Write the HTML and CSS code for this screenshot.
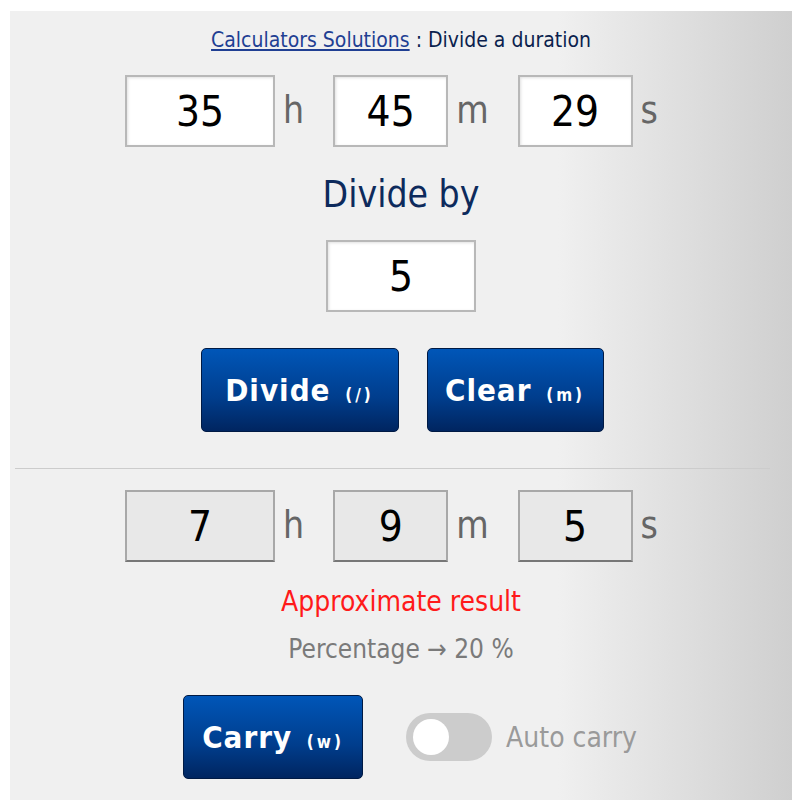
FILE: index.html
```html
<!DOCTYPE html>
<html>
  <head>
    <title>Divide a duration</title>
    <link rel="stylesheet" href="styles.css">
  </head>
  <body>
    <div class="calc">
      <div class="title">
        <a href="#" class="siteLink">Calculators Solutions</a> : Divide a duration
      </div>

      <div class="timeRow">
        <input class="field wide" type="text" value="35" /><span class="unit">h</span>
        <input class="field" type="text" value="45" /><span class="unit">m</span>
        <input class="field" type="text" value="29" /><span class="unit last">s</span>
      </div>

      <div class="divideBy">Divide by</div>
      <input class="field wide divisor" type="text" value="5" />

      <div class="buttons">
        <button class="btn divideBtn">Divide <small>(/)</small></button>
        <button class="btn clearBtn">Clear <small>(m)</small></button>
      </div>

      <hr class="sep" />

      <div class="timeRow result">
        <input class="field wide" type="text" value="7" readonly /><span class="unit">h</span>
        <input class="field" type="text" value="9" readonly /><span class="unit">m</span>
        <input class="field" type="text" value="5" readonly /><span class="unit last">s</span>
      </div>

      <div class="approx">Approximate result</div>
      <div class="percent">Percentage &rarr; 20 %</div>

      <div class="carryRow">
        <button class="btn carryBtn">Carry <small>(w)</small></button>
        <label class="switch">
          <input type="checkbox" />
          <span class="slider"></span>
        </label>
        <span class="autoLabel">Auto carry</span>
      </div>
    </div>
  </body>
</html>
```

FILE: styles.css
```css
body {
  margin: 0;
  padding: 11px 8px 9px 10px;
  background-color: #fff;
  font-family: "DejaVu Sans Condensed", "DejaVu Sans", sans-serif;
}

.calc {
  height: 789px;
  box-sizing: border-box;
  display: flex;
  flex-direction: column;
  align-items: center;
  padding-top: 16px;
  background: linear-gradient(to right, #f0f0f0 0%, #f0f0f0 70%, #cfcfcf 100%);
}

.title {
  height: 26px;
  line-height: 26px;
  font-size: 21px;
  color: #0b1f4e;
}

.siteLink {
  color: #1f3f93;
  text-decoration: underline;
}

.timeRow {
  display: flex;
  align-items: center;
  margin-top: 22px;
  padding-right: 5px;
}

.field {
  width: 115px;
  height: 72px;
  box-sizing: border-box;
  border: 2px solid #b8b8b8;
  background-color: #fff;
  box-shadow: inset 1px 1px 3px rgba(0, 0, 0, 0.12);
  font-family: inherit;
  font-size: 42px;
  color: #000;
  text-align: center;
  padding: 0;
}

.field.wide {
  width: 150px;
}

.unit {
  margin: 0 29px 0 8px;
  font-size: 37px;
  color: #666;
  line-height: 72px;
}

.unit.last {
  margin-right: 14px;
}

.divideBy {
  margin-top: 23px;
  height: 50px;
  line-height: 50px;
  font-size: 37px;
  color: #0d2a5c;
}

.divisor {
  margin-top: 20px;
}

.buttons {
  display: flex;
  gap: 28px;
  margin-top: 36px;
  padding-left: 2px;
}

.btn {
  height: 84px;
  padding: 0;
  border: 1px solid #001a44;
  border-radius: 5px;
  background: linear-gradient(to bottom, #0056b8 0%, #003d8c 60%, #002560 100%);
  color: #fff;
  font-family: inherit;
  font-size: 31px;
  font-weight: bold;
  letter-spacing: 1px;
  cursor: pointer;
}

.btn small {
  font-size: 17px;
  letter-spacing: 3px;
  margin-left: 4px;
}

.divideBtn {
  width: 198px;
}

.clearBtn {
  width: 177px;
}

.sep {
  width: 755px;
  margin: 36px 0 0 5px;
  border: none;
  border-top: 1px solid #cccccc;
  align-self: flex-start;
}

.result {
  margin-top: 21px;
}

.result .field {
  background-color: #e8e8e8;
  border-color: #a8a8a8;
  border-bottom: 2px solid #777;
  box-shadow: none;
}

.approx {
  margin-top: 22px;
  height: 36px;
  line-height: 36px;
  font-size: 28px;
  color: #ff1a1a;
}

.percent {
  margin-top: 14px;
  height: 30px;
  line-height: 30px;
  font-size: 26px;
  color: #7a7a7a;
}

.carryRow {
  display: flex;
  align-items: center;
  margin-top: 31px;
  margin-left: 18px;
}

.carryBtn {
  width: 180px;
}

.switch {
  position: relative;
  display: inline-block;
  width: 86px;
  height: 48px;
  margin-left: 43px;
}

.switch input {
  opacity: 0;
  width: 0;
  height: 0;
}

.slider {
  position: absolute;
  inset: 0;
  border-radius: 24px;
  background-color: #cccccc;
}

.slider::before {
  content: "";
  position: absolute;
  left: 7px;
  top: 6px;
  width: 36px;
  height: 36px;
  border-radius: 50%;
  background-color: #fff;
}

.autoLabel {
  margin-left: 14px;
  font-size: 28px;
  color: #9a9a9a;
}
```
